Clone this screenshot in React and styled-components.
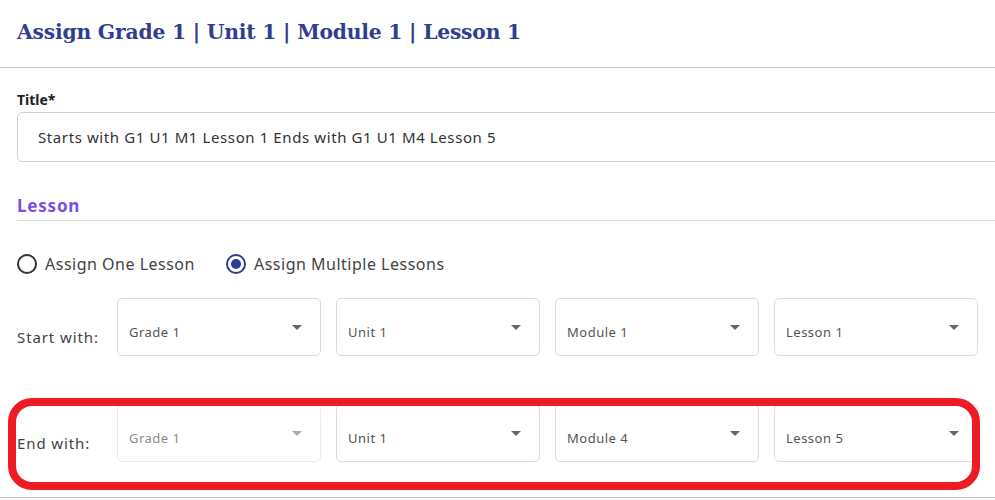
import React from "react";
import styled, { createGlobalStyle } from "styled-components";

const Global = createGlobalStyle`
  html, body { margin: 0; padding: 0; background: #fff; overflow: hidden; }
  body { font-family: "Noto Sans", "Liberation Sans", sans-serif; }
`;

const Page = styled.div`
  width: 995px;
  height: 500px;
  overflow: hidden;
`;

const Header = styled.header`
  height: 68px;
  border-bottom: 1px solid #c4c4c4;
  display: flex;
  align-items: center;
  padding: 0 17px 4px;
  box-sizing: border-box;
`;

const Heading = styled.h1`
  margin: 0;
  font-family: "DejaVu Serif", serif;
  font-weight: 700;
  font-size: 20.3px;
  letter-spacing: -0.2px;
  color: #2f3e8e;
`;

const Form = styled.div`
  padding: 23px 0 0 17px;
  height: 430px;
  box-sizing: border-box;
  border-bottom: 1px solid #c4c4c4;
`;

const Label = styled.div`
  font-size: 14px;
  font-weight: 700;
  color: #222;
  line-height: 18px;
  margin-bottom: 3px;
`;

const TextInput = styled.div`
  width: 1000px;
  height: 50px;
  box-sizing: border-box;
  border: 1px solid #cfcfcf;
  border-radius: 5px;
  display: flex;
  align-items: center;
  padding: 0 20px;
  font-size: 15px;
  letter-spacing: 0.6px;
  color: #333;
`;

const Section = styled.div`
  margin-top: 33px;
  border-bottom: 1px solid #ddd;
  padding-bottom: 3px;
`;

const SectionTitle = styled.div`
  font-size: 17px;
  font-weight: 700;
  letter-spacing: 0.8px;
  color: #7b4fe2;
  line-height: 22px;
`;

const RadioRow = styled.div`
  display: flex;
  gap: 31px;
  margin-top: 32px;
  align-items: center;
`;

const RadioItem = styled.label`
  display: flex;
  align-items: center;
  gap: 8px;
  font-size: 16px;
  letter-spacing: 0.5px;
  color: #444;
`;

const Circle = styled.span`
  width: 20px;
  height: 20px;
  box-sizing: border-box;
  border-radius: 50%;
  border: 2px solid ${(p) => (p.$checked ? "#2f3e8e" : "#333")};
  display: flex;
  align-items: center;
  justify-content: center;
  &::after {
    content: "";
    width: 10px;
    height: 10px;
    border-radius: 50%;
    background: ${(p) => (p.$checked ? "#2f3e8e" : "transparent")};
  }
`;

const Row = styled.div`
  position: relative;
  display: flex;
  align-items: flex-end;
  width: 961px;
  margin-top: ${(p) => p.$mt}px;
`;

const RowLabel = styled.div`
  width: 100px;
  font-size: 15px;
  letter-spacing: 0.9px;
  color: #444;
  padding-bottom: 9px;
`;

const Selects = styled.div`
  display: flex;
  gap: 15px;
`;

const Select = styled.div`
  width: 204px;
  height: 58px;
  box-sizing: border-box;
  border: 1px solid ${(p) => (p.$disabled ? "#ececec" : "#dcdcdc")};
  border-radius: 5px;
  display: flex;
  align-items: center;
  justify-content: space-between;
  padding: 10px 18px 0 11px;
  font-size: 13px;
  letter-spacing: 0.5px;
  color: ${(p) => (p.$disabled ? "#8a8a8a" : "#555")};
`;

const Arrow = styled.span`
  width: 0;
  height: 0;
  border-left: 5px solid transparent;
  border-right: 5px solid transparent;
  border-top: 5px solid ${(p) => (p.$disabled ? "#aaa" : "#666")};
  margin-bottom: 9px;
`;

const Highlight = styled.div`
  position: absolute;
  top: -6px;
  left: -9px;
  right: -2px;
  bottom: -28px;
  border: 8px solid #ed1c24;
  border-radius: 24px;
  pointer-events: none;
`;

const start = ["Grade 1", "Unit 1", "Module 1", "Lesson 1"];
const end = ["Grade 1", "Unit 1", "Module 4", "Lesson 5"];

function SelectBox({ value, disabled }) {
  return (
    <Select $disabled={disabled}>
      <span>{value}</span>
      <Arrow $disabled={disabled} />
    </Select>
  );
}

export default function App() {
  return (
    <Page>
      <Global />
      <Header>
        <Heading>Assign Grade 1 | Unit 1 | Module 1 | Lesson 1</Heading>
      </Header>
      <Form>
        <Label>Title*</Label>
        <TextInput>Starts with G1 U1 M1 Lesson 1 Ends with G1 U1 M4 Lesson 5</TextInput>
        <Section>
          <SectionTitle>Lesson</SectionTitle>
        </Section>
        <RadioRow>
          <RadioItem>
            <Circle />
            Assign One Lesson
          </RadioItem>
          <RadioItem>
            <Circle $checked />
            Assign Multiple Lessons
          </RadioItem>
        </RadioRow>
        <Row $mt={23}>
          <RowLabel>Start with:</RowLabel>
          <Selects>
            {start.map((v, i) => (
              <SelectBox key={i} value={v} />
            ))}
          </Selects>
        </Row>
        <Row $mt={48}>
          <RowLabel>End with:</RowLabel>
          <Selects>
            {end.map((v, i) => (
              <SelectBox key={i} value={v} disabled={i === 0} />
            ))}
          </Selects>
          <Highlight />
        </Row>
      </Form>
    </Page>
  );
}
